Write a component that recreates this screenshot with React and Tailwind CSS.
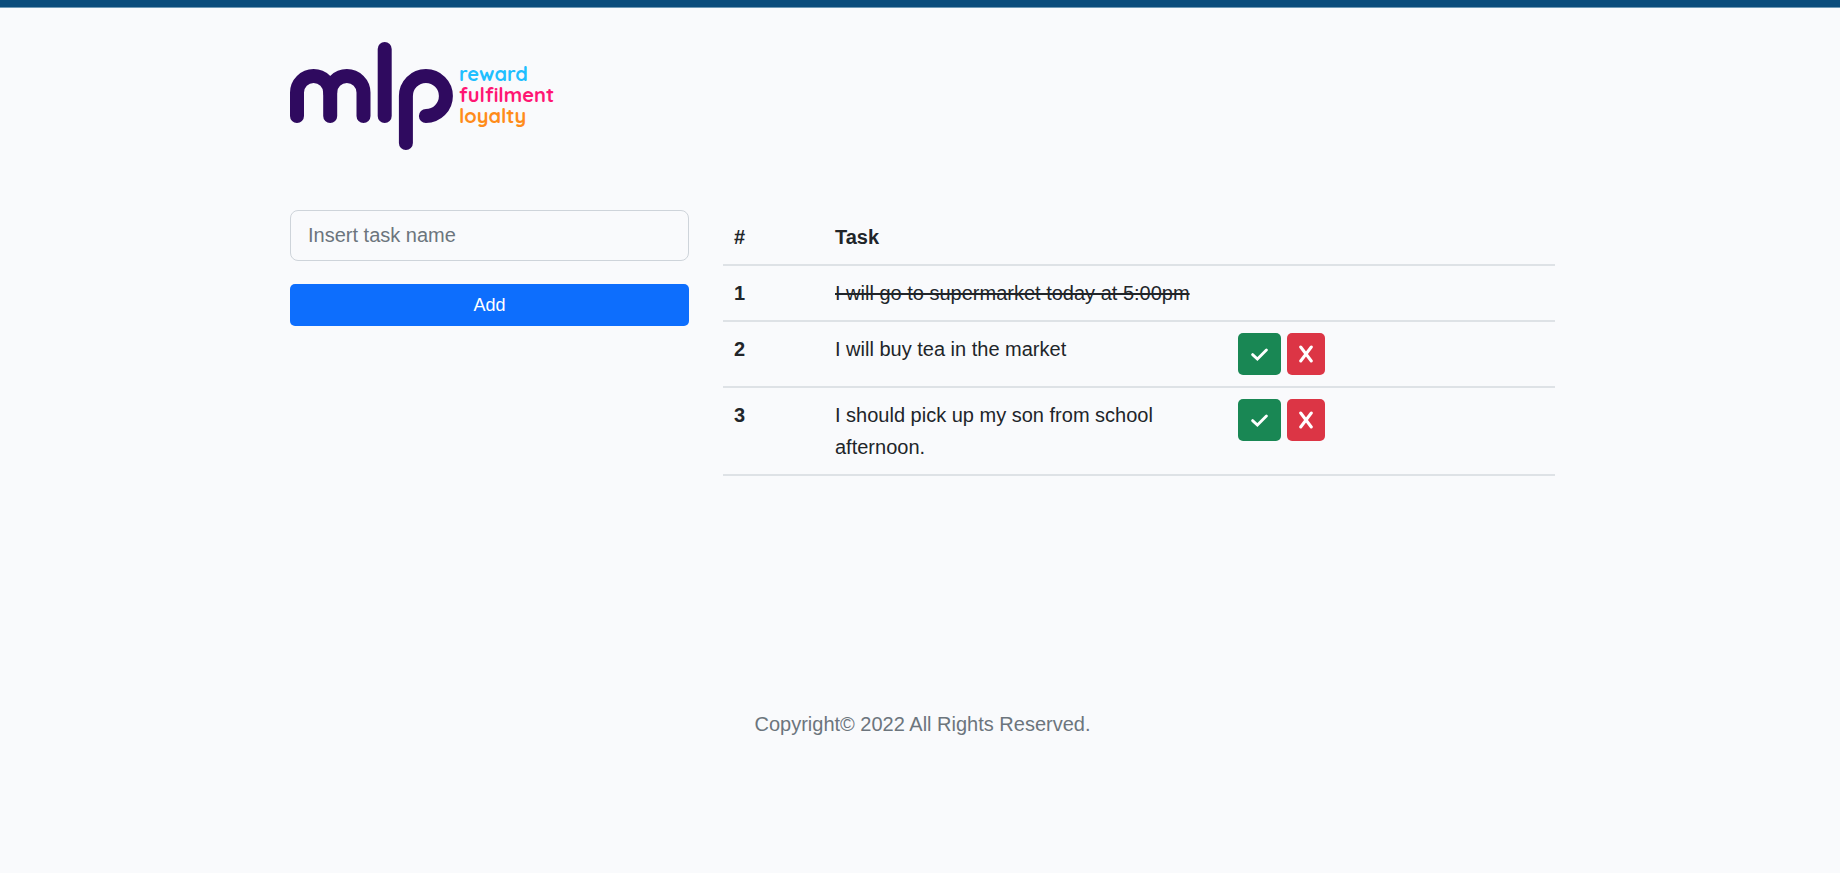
const tasks = [
  { id: 1, name: 'I will go to supermarket today at 5:00pm', done: true },
  { id: 2, name: 'I will buy tea in the market', done: false },
  { id: 3, name: 'I should pick up my son from school afternoon.', done: false },
];

function Logo() {
  return (
    <a href="#" className="flex w-fit items-start">
      <svg
        width="163"
        height="108"
        viewBox="0 0 163 108"
        fill="none"
        stroke="#2f0a5f"
        strokeWidth="14"
        strokeLinecap="round"
        strokeLinejoin="round"
        role="img"
        aria-label="mlp"
      >
        <path d="M7 74V50.6a16.6 16.6 0 0 1 33.2 0V74" />
        <path d="M40.2 50.6a16.6 16.6 0 0 1 33.3 0V74" />
        <path d="M94.7 7V74" />
        <path d="M115.9 101V54A20 20 0 1 1 135.9 74" />
      </svg>
      <span className="mt-[21px] ml-[6px] flex flex-col font-['Quicksand','Lato',sans-serif] text-[20px] leading-[21px] font-bold">
        <span className="text-[#1fbfff]">reward</span>
        <span className="text-[#ff1673]">fulfilment</span>
        <span className="text-[#ff8c1a]">loyalty</span>
      </span>
    </a>
  );
}

function CheckIcon() {
  return (
    <svg width="17" height="13" viewBox="0 0 17 13" fill="none" stroke="currentColor" strokeWidth="2.8" strokeLinecap="round" aria-hidden="true">
      <path d="M1.6 6.6L6.4 11L15.4 2" />
    </svg>
  );
}

function CrossIcon() {
  return (
    <svg width="14" height="18" viewBox="0 0 14 18" fill="none" stroke="currentColor" strokeWidth="3" strokeLinecap="round" aria-hidden="true">
      <path d="M1.7 2L12.3 16M12.3 2L1.7 16" />
    </svg>
  );
}

function TaskRow({ task }) {
  return (
    <tr className="border-b-2 border-[#dee2e6] align-top">
      <th scope="row" className="p-[11px] text-left font-bold">{task.id}</th>
      <td className={task.done ? 'p-[11px] line-through' : 'p-[11px]'}>{task.name}</td>
      <td className="p-[11px]">
        {!task.done && (
          <div className="flex gap-[6px]">
            <button type="button" aria-label="Complete task" className="flex h-[42px] w-[43px] items-center justify-center rounded-[5px] bg-[#198754] text-white">
              <CheckIcon />
            </button>
            <button type="button" aria-label="Delete task" className="flex h-[42px] w-[38px] items-center justify-center rounded-[5px] bg-[#dc3545] text-white">
              <CrossIcon />
            </button>
          </div>
        )}
      </td>
    </tr>
  );
}

export default function App() {
  return (
    <div className="min-h-screen bg-[#f9fafc] font-['Liberation_Sans',Arial,sans-serif] text-[20px] leading-8 text-[#212529]">
      <div className="h-2 border-b border-[#6f99b5] bg-[#0b4d7c]" />
      <div className="pl-[5px]">
        <div className="mx-auto max-w-[1265px]">
          <header className="pt-[34px] pb-[60px]">
            <Logo />
          </header>
          <main className="grid items-start gap-[34px] lg:grid-cols-[399fr_832fr]">
            <form className="flex flex-col gap-[23px]" onSubmit={(e) => e.preventDefault()}>
              <input
                type="text"
                aria-label="Task name"
                placeholder="Insert task name"
                className="h-[51px] w-full rounded-[8px] border border-[#ced4da] bg-transparent px-[17px] placeholder:text-[#6c757d]"
              />
              <button type="submit" className="h-[42px] w-full rounded-[5px] bg-[#0d6efd] text-[18px] leading-7 text-white">
                Add
              </button>
            </form>
            <table className="w-full table-fixed border-collapse">
              <colgroup>
                <col className="w-[101px]" />
                <col className="w-[403px]" />
                <col />
              </colgroup>
              <thead>
                <tr className="border-b-2 border-[#dee2e6]">
                  <th scope="col" className="p-[11px] text-left font-bold">#</th>
                  <th scope="col" className="p-[11px] text-left font-bold">Task</th>
                  <td className="p-[11px]" />
                </tr>
              </thead>
              <tbody>
                {tasks.map((task) => (
                  <TaskRow key={task.id} task={task} />
                ))}
              </tbody>
            </table>
          </main>
          <footer className="pt-[232px] pb-16 text-center text-[#6c757d]">
            Copyright© 2022 All Rights Reserved.
          </footer>
        </div>
      </div>
    </div>
  );
}
